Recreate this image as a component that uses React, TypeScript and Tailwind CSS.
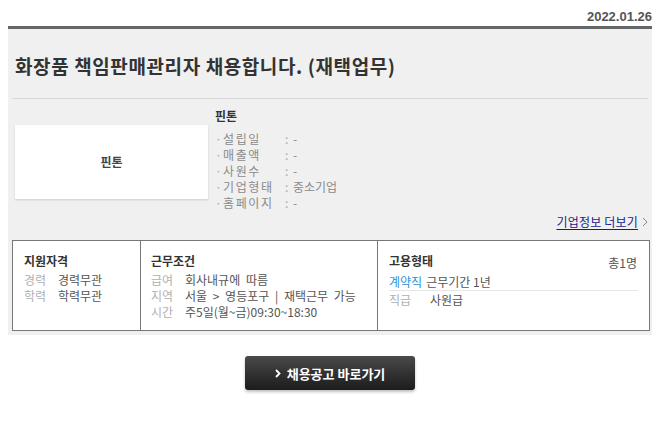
import React from 'react';

const FONT = { fontFamily: '"Noto Sans CJK KR", "Noto Sans", "Liberation Sans", sans-serif' };

const companyInfo: [string, string][] = [
  ['설립일', '-'],
  ['매출액', '-'],
  ['사원수', '-'],
  ['기업형태', '중소기업'],
  ['홈페이지', '-'],
];

const Row = ({ label, value }: { label: string; value: string }) => (
  <div className="flex h-[16px] items-center">
    <span className="w-[34px] text-[#b0b0b0]">{label}</span>
    <span className="text-[#555] [word-spacing:3px]">{value}</span>
  </div>
);

export default function App() {
  return (
    <div className="w-[660px] h-[432px] bg-white text-[12px] leading-none" style={FONT}>
      {/* date */}
      <div className="flex h-[26px] items-center justify-end pr-[8px] pt-[7px]">
        <span className="text-[13px] font-bold text-[#555]" style={{ fontFamily: '"Liberation Sans", sans-serif' }}>
          2022.01.26
        </span>
      </div>

      <div className="mx-[8px] border-t-[3px] border-[#666] bg-[#f0f0f0] pl-[4px] pr-[2px] pb-[4px]">
        {/* title */}
        <div className="mr-[2px] flex h-[70px] items-center border-b border-[#d9d9d9] pl-[3px] pt-[4px]">
          <h1 className="text-[19px] font-bold text-[#333] tracking-[0.6px]">화장품 책임판매관리자 채용합니다. (재택업무)</h1>
        </div>

        {/* company */}
        <div className="flex h-[141px] flex-col pt-[11px]">
          <div className="flex">
            <div className="ml-[3px] mt-[15px] flex h-[74px] w-[193px] items-center justify-center bg-white shadow-[0_1px_2px_rgba(0,0,0,0.15)]">
              <span className="font-bold text-[#444]">핀톤</span>
            </div>
            <div className="ml-[7px]">
              <div className="h-[16px] font-bold text-[#333]">핀톤</div>
              <div className="mt-[5px]">
                {companyInfo.map(([k, v]) => (
                  <div key={k} className="flex h-[16px] items-center text-[#8a8a8a]">
                    <span className="w-[8px] text-[#aaa]">·</span>
                    <span className="w-[62px] tracking-[1.6px]">{k}</span>
                    <span className="w-[8px] text-[#aaa]">:</span>
                    <span>{v}</span>
                  </div>
                ))}
              </div>
            </div>
          </div>
          <div className="mt-auto mb-[12px] flex items-center justify-end pr-[2px]">
            <a href="#" className="text-[#1a1a8c] underline underline-offset-[2px] tracking-[0.2px]">기업정보 더보기</a>
            <svg className="ml-[4px]" width="6" height="10" viewBox="0 0 6 10">
              <path d="M1 1l4 4-4 4" fill="none" stroke="#888" strokeWidth="1" />
            </svg>
          </div>
        </div>

        {/* conditions table */}
        <div className="flex h-[91px] border border-[#777] bg-white">
          <div className="w-[128px] border-r border-[#777] pl-[11px] pt-[14px]">
            <div className="mb-[5px] font-bold text-[#333]">지원자격</div>
            <Row label="경력" value="경력무관" />
            <Row label="학력" value="학력무관" />
          </div>
          <div className="w-[237px] border-r border-[#777] pl-[10px] pt-[14px]">
            <div className="mb-[5px] font-bold text-[#333]">근무조건</div>
            <Row label="급여" value="회사내규에 따름" />
            <Row label="지역" value="서울 > 영등포구 | 재택근무 가능" />
            <Row label="시간" value="주5일(월~금)09:30~18:30" />
          </div>
          <div className="flex-1 pl-[11px] pr-[11px] pt-[14px]">
            <div className="mb-[5px] flex justify-between">
              <span className="font-bold text-[#333]">고용형태</span>
              <span className="mt-[2px] pr-[1px] text-[#555]">총1명</span>
            </div>
            <div className="flex h-[17px] items-center border-b border-[#e6e6e6] pb-[1px]">
              <span className="mr-[4px] text-[#2f8fd8]">계약직</span>
              <span className="text-[#555]">근무기간 1년</span>
            </div>
            <div className="flex h-[18px] items-center">
              <span className="w-[41px] text-[#b0b0b0]">직급</span>
              <span className="text-[#555]">사원급</span>
            </div>
          </div>
        </div>
      </div>

      {/* button */}
      <div className="mt-[21px] flex justify-center">
        <button className="flex h-[34px] w-[170px] items-center justify-center gap-[6px] rounded-[3px] bg-gradient-to-b from-[#4a4a4a] to-[#1c1c1c] text-white shadow-[0_2px_3px_rgba(0,0,0,0.25)]">
          <svg width="6" height="9" viewBox="0 0 6 9">
            <path d="M1 1l3.5 3.5L1 8" fill="none" stroke="#fff" strokeWidth="1.8" />
          </svg>
          <span className="text-[13px] font-bold">채용공고 바로가기</span>
        </button>
      </div>
    </div>
  );
}
